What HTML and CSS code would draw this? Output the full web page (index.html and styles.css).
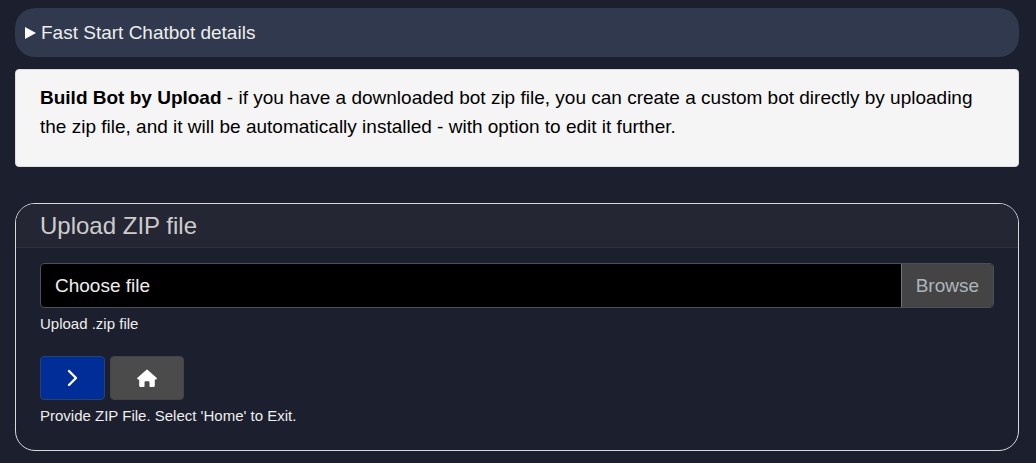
FILE: index.html
```html
<!DOCTYPE html>
<html lang="en">

<head>
   <meta charset="utf-8">
   <meta name="viewport" content="width=device-width, initial-scale=1">
   <title>Build Bot by Upload</title>
   <link rel="stylesheet" href="styles.css">
</head>

<body>
   <details class="bot-details">
      <summary>Fast Start Chatbot details</summary>
   </details>

   <div class="notice">
      <p><b>Build Bot by Upload</b> - if you have a downloaded bot zip file, you can create a custom bot directly by uploading the zip file, and it will be automatically installed - with option to edit it further.</p>
   </div>

   <form class="card">
      <h1 class="card-header">Upload ZIP file</h1>
      <div class="card-body">
         <div class="custom-file">
            <input type="file" id="zipFile" class="file-input" accept=".zip" aria-describedby="zipHelp">
            <label for="zipFile" class="file-label">
               <span class="file-name">Choose file</span>
               <span class="file-browse">Browse</span>
            </label>
         </div>
         <small class="help" id="zipHelp">Upload .zip file</small>

         <div class="buttons">
            <button type="submit" class="btn btn-next" aria-label="Next">
               <svg width="11" height="18" viewBox="0 0 11 18">
                  <path d="M2 2l7 7-7 7" fill="none" stroke="#fff" stroke-width="2.400" stroke-linecap="round" stroke-linejoin="round"/>
               </svg>
            </button>
            <button type="button" class="btn btn-home" aria-label="Home">
               <svg width="20" height="19" viewBox="0.500 0.500 21 19.500">
                  <path d="M10.200 1.200a1.200 1.200 0 0 1 1.600 0l9.200 8.200c.8.700.4 1.800-.7 1.800h-1.100v6.500c0 1-.6 1.600-1.600 1.600h-3.200c-.5 0-.8-.3-.8-.8v-4.100c0-.7-.5-1.200-1.200-1.200h-2.800c-.7 0-1.200.5-1.200 1.200v4.100c0 .5-.3.8-.8.8H4.400c-1 0-1.600-.6-1.600-1.600v-6.500H1.700c-1.100 0-1.500-1.100-.7-1.800z" fill="#fff"/>
               </svg>
            </button>
         </div>
         <small class="help">Provide ZIP File. Select 'Home' to Exit.</small>
      </div>
   </form>
</body>

</html>
```

FILE: styles.css
```css
* {
   box-sizing: border-box;
}

body {
   font-family: "Liberation Sans", Arial, sans-serif;
   font-size: 19px;
   line-height: 29px;
   background-color: #1c1f2d;
   color: #eee;
   margin: 0;
   padding: 8px 17px 12px 15px;
}

.bot-details {
   background-color: #30394d;
   border-radius: 20px;
   padding: 10px;
   margin-bottom: 12px;
}

.bot-details summary {
   display: flex;
   align-items: center;
   gap: 5px;
   cursor: pointer;
}

.bot-details summary::before {
   content: "";
   border-left: 11px solid #fff;
   border-top: 6px solid transparent;
   border-bottom: 6px solid transparent;
}

.bot-details[open] summary::before {
   transform: rotate(90deg);
}

.notice {
   background-color: #f5f5f5;
   color: #000;
   border: 1px solid #ddd;
   border-radius: 4px;
   padding: 13px 24px 25px;
   margin-bottom: 36px;
}

.notice p {
   margin: 0;
}

.card {
   border: 1px solid #d5d8df;
   border-radius: 20px;
   overflow: hidden;
}

.card-header {
   background-color: #242733;
   color: #ccc;
   border-bottom: 1px solid #2e303d;
   font-size: 24px;
   font-weight: normal;
   margin: 0;
   padding: 7px 24px;
}

.card-body {
   padding: 15px 24px 23px;
}

.custom-file {
   position: relative;
}

/* the real input lies over the styled label */
.file-input {
   position: absolute;
   inset: 0;
   width: 100%;
   opacity: 0;
   cursor: pointer;
}

.file-label {
   display: flex;
   height: 45px;
   line-height: 43px;
   background-color: #000;
   border: 1px solid #495057;
   border-radius: 4px;
   overflow: hidden;
}

.file-name {
   flex: 1;
   padding: 0 14px;
}

.file-browse {
   background-color: #444;
   color: #adb5bd;
   border-left: 1px solid #6c757d;
   padding: 0 14px;
}

.file-input:focus + .file-label {
   border-color: #80bdff;
}

.help {
   display: block;
   font-size: 15px;
   line-height: 22px;
   margin-top: 5px;
}

.buttons {
   display: flex;
   gap: 5px;
   margin-top: 21px;
}

.btn {
   display: flex;
   align-items: center;
   justify-content: center;
   height: 44px;
   border: 1px solid #444;
   border-radius: 4px;
   padding: 0 26px;
   cursor: pointer;
}

.btn-next {
   background-color: #002d97;
   border-color: #24446f;
}

.btn-home {
   background-color: #4b4b4b;
}

.btn:hover {
   opacity: 0.9;
}
```
